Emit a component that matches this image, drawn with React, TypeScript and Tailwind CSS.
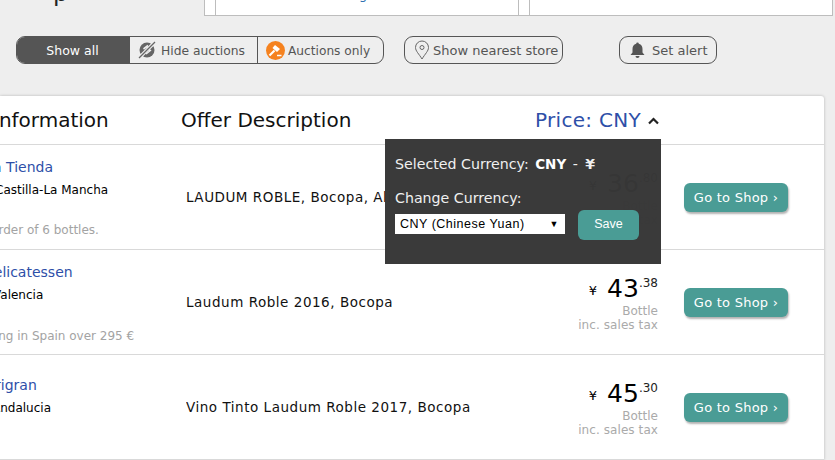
import React from "react";

function Row({ shop, shopCls, regionCls, region, noteCls, note, desc, yen, cents }: any) {
  return (
    <div className="flex h-[105px] border-b border-[#d9d9d9] relative">
      <div className="w-[186px] shrink-0 overflow-hidden relative">
        <div className={"text-[14px] leading-[18px] text-[#2e4fa8] whitespace-nowrap " + shopCls}>{shop}</div>
        <div className={"mt-[5px] text-[12px] leading-[18px] text-black whitespace-nowrap " + regionCls}>{region}</div>
        <div className={"text-[12px] leading-[18px] text-[#a3a3a3] whitespace-nowrap " + noteCls}>{note}</div>
      </div>
      <div className="w-[340px] shrink-0 pt-[43px] text-[13.5px] tracking-[0.53px] leading-[18px] text-[#111] whitespace-nowrap overflow-hidden">{desc}</div>
      <div className="w-[132px] shrink-0 flex flex-col items-end pt-[21px]">
        <div className="flex items-start h-[36px]">
          <span className="text-[13px] leading-[12px] mt-[14px] mr-[10px] text-black">¥</span>
          <span className="text-[25px] leading-[36px] text-black">{yen}</span>
          <span className="text-[12px] leading-[12px] mt-[6px] text-[#222]">.{cents}</span>
        </div>
        <div className="text-[12px] leading-[14px] text-[#aaaaaa] mt-[-3px]">Bottle</div>
        <div className="text-[12px] leading-[14px] text-[#aaaaaa] tracking-[0.08px]">inc. sales tax</div>
      </div>
      <div className="ml-[26px] pt-[38px]">
        <div className="w-[104px] h-[29px] rounded-[6px] bg-[#4a9c95] text-white text-[13px] tracking-[0.25px] leading-[29px] text-center shadow-[1px_2px_2px_rgba(0,0,0,0.3)] whitespace-nowrap">
          Go to Shop ›
        </div>
      </div>
    </div>
  );
}

export default function App() {
  return (
    <div className="w-[835px] h-[460px] overflow-hidden bg-[#eeeeee] relative font-['DejaVu_Sans',Verdana,sans-serif]">
      {/* top strip */}
      <div className="flex h-[16px]">
        <div className="w-[204px] relative overflow-hidden">
          <div className="absolute left-[53px] top-[-22px] text-[24px] text-[#222] leading-[30px]">p</div>
        </div>
        <div className="w-[11px] bg-white border-l border-b border-[#bdbdbd]" />
        <div className="w-[304px] bg-white border-x border-b border-[#bdbdbd] relative overflow-hidden">
          <div className="absolute left-[143px] top-[-14px] text-[13px] leading-[18px] text-[#2e6fb0]">g</div>
        </div>
        <div className="w-[10px] bg-white border-b border-[#bdbdbd]" />
        <div className="w-[304px] bg-white border-x border-b border-[#bdbdbd]" />
      </div>

      {/* filter bar */}
      <div className="flex items-center h-[28px] mt-[20px] ml-[16px] text-[13px] text-[#555555] whitespace-nowrap">
        <div className="flex h-[28px] w-[368px] rounded-[9px] border border-[#555] overflow-hidden">
          <div className="w-[113px] bg-[#555555] text-white text-[12.5px] pt-[2px] pr-[2px] flex items-center justify-center">Show all</div>
          <div className="w-[128px] border-r border-[#555] text-[12.3px] flex items-center pl-[8px] gap-[5px]">
            <svg width="18" height="18" viewBox="0 0 18 18">
              <circle cx="9" cy="9" r="7.5" fill="#666" />
              <path d="M5.5 8 L10 4.5 M8 13 L13 9 M9 6 L12 9.5" stroke="#eee" strokeWidth="1.6" fill="none" />
              <path d="M1 17 L17 1" stroke="#eeeeee" strokeWidth="3.5" />
              <path d="M1 17 L17 1" stroke="#666" strokeWidth="1.3" />
            </svg>
            <span className="pt-[2px]">Hide auctions</span>
          </div>
          <div className="flex-1 flex items-center text-[12.2px] pl-[8px] gap-[3px]">
            <svg width="19" height="19" viewBox="0 0 19 19">
              <circle cx="9.5" cy="9.5" r="9.5" fill="#f5821f" />
              <path d="M9 4 L14 8 L11 11 L6.5 7 Z" fill="#fff" />
              <path d="M8.5 9.5 L3.5 14.5" stroke="#fff" strokeWidth="2.2" />
              <path d="M11 14.5 L15.5 14.5" stroke="#fff" strokeWidth="1.5" />
            </svg>
            <span className="pt-[2px]">Auctions only</span>
          </div>
        </div>
        <div className="ml-[20px] w-[159px] h-[28px] rounded-[9px] border border-[#555] flex items-center pl-[9px] gap-[3px]">
          <svg width="16" height="20" viewBox="0 0 16 20" fill="none" stroke="#666" strokeWidth="1">
            <path d="M8 19 C5 14 1.5 11 1.5 7.5 A6.5 6.5 0 0 1 14.500 7.5 C14.500 11 11 14 8 19 Z" />
            <circle cx="8" cy="7.500" r="2" />
          </svg>
          <span className="pt-px">Show nearest store</span>
        </div>
        <div className="ml-[56px] w-[98px] h-[28px] rounded-[9px] border border-[#555] flex items-center pl-[10px] gap-[7px]">
          <svg width="15" height="16" viewBox="0 0 15 16" fill="#555">
            <path d="M7.500 0.500 a1.300 1.300 0 0 1 1.300 1.300 C11.500 2.500 12.500 4.500 12.500 7 V10.500 L14.500 13 H0.500 L2.500 10.500 V7 C2.500 4.500 3.500 2.500 6.200 1.800 a1.300 1.300 0 0 1 1.300 -1.300 Z" />
            <path d="M5.500 14 H9.500 A2 2 0 0 1 5.500 14 Z" />
          </svg>
          <span className="pt-px">Set alert</span>
        </div>
      </div>

      {/* results card */}
      <div className="absolute left-[0px] top-[96px] w-[824px] bg-white rounded-tr-[3px] shadow-[0_0_3px_rgba(0,0,0,0.25)]">
        <div className="flex h-[49px] border-b border-[#d9d9d9] items-center text-[20px] text-[#111] whitespace-nowrap">
          <div className="w-[181px] shrink-0 overflow-hidden"><span className="block ml-[-7px]">Information</span></div>
          <div className="w-[354px] shrink-0">Offer Description</div>
          <div className="flex items-center text-[#2e4fa8] tracking-[0.3px]">
            Price: CNY
            <svg className="ml-[7px] mt-[2px]" width="11" height="8" viewBox="0 0 11 8" fill="none" stroke="#222" strokeWidth="2.2"><path d="M1 6.500 L5.500 2 L10 6.500" /></svg>
          </div>
        </div>
        <Row shop="a Tienda" shopCls="pt-[13px] ml-[-7px]" region="Castilla-La Mancha" regionCls="ml-[-5px]" note="Order of 6 bottles." noteCls="mt-[22px] ml-[-11px]" desc="LAUDUM ROBLE, Bocopa, Alicante" yen="36" cents="80" />
        <Row shop="Delicatessen" shopCls="pt-[13px] ml-[-17px]" region="Valencia" regionCls="ml-[-7px]" note="Shipping in Spain over 295 €" noteCls="mt-[23px] ml-[-39px]" desc="Laudum Roble 2016, Bocopa" yen="43" cents="38" />
        <Row shop="Origran" shopCls="pt-[21px] ml-[-16px]" region="Andalucia" regionCls="ml-[-8px]" note="" noteCls="" desc="Vino Tinto Laudum Roble 2017, Bocopa" yen="45" cents="30" />
      </div>

      {/* currency popover */}
      <div className="absolute left-[385px] top-[139px] w-[276px] h-[125px] bg-[#373737]/[0.985] text-white pl-[10px] pt-[15px] whitespace-nowrap">
        <div className="text-[14.2px] leading-[20px] text-[#f0f0f0]">
          Selected Currency: <b className="ml-[2px] text-white text-[13.5px]">CNY</b> <span className="mx-[2px]">-</span> <b className="ml-[1px] text-[14px]">¥</b>
        </div>
        <div className="mt-[14px] text-[14.2px] leading-[20px] text-[#f0f0f0]">Change Currency:</div>
        <div className="flex items-start mt-[2px]">
          <div className="w-[170px] h-[20px] bg-white text-black text-[12.5px] tracking-[0.5px] leading-[20px] pl-[5px] pr-[6px] mt-[4px] flex items-center justify-between font-['Liberation_Sans',sans-serif]">
            CNY (Chinese Yuan)
            <span className="text-[9px]">▼</span>
          </div>
          <div className="ml-[13px] w-[61px] h-[30px] rounded-[6px] bg-[#4a9c95] text-center text-[12.5px] leading-[28px] text-white font-['Liberation_Sans',sans-serif]">Save</div>
        </div>
      </div>
    </div>
  );
}
